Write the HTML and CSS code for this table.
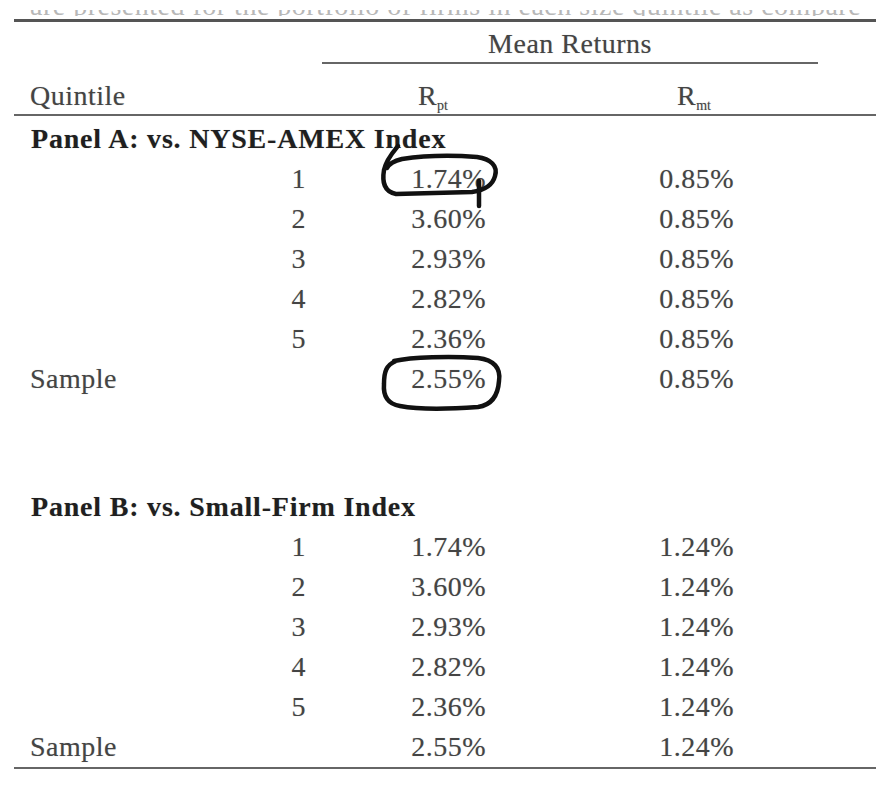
FILE: index.html
```html
<!DOCTYPE html>
<html lang="en">
<head>
<meta charset="utf-8">
<title>Mean Returns by Quintile</title>
<link rel="stylesheet" href="styles.css">
</head>
<body>
<div class="page">
  <div class="cut"><div class="cut-text">are presented for the portfolio of firms in each size quintile as compared with the market indices used</div></div>
  <div class="table">
    <div class="group">Mean Returns</div>
    <div class="row head">
      <div class="label">Quintile</div>
      <div class="hp">R<sub>pt</sub></div>
      <div class="hm">R<sub>mt</sub></div>
    </div>

    <div class="panel a">Panel A: vs. NYSE-AMEX Index</div>
    <div class="row"><div class="q">1</div><div class="v">1.74%</div><div class="v">0.85%</div></div>
    <div class="row"><div class="q">2</div><div class="v">3.60%</div><div class="v">0.85%</div></div>
    <div class="row"><div class="q">3</div><div class="v">2.93%</div><div class="v">0.85%</div></div>
    <div class="row"><div class="q">4</div><div class="v">2.82%</div><div class="v">0.85%</div></div>
    <div class="row"><div class="q">5</div><div class="v">2.36%</div><div class="v">0.85%</div></div>
    <div class="row"><div class="label">Sample</div><div class="v">2.55%</div><div class="v">0.85%</div></div>

    <div class="panel b">Panel B: vs. Small-Firm Index</div>
    <div class="row"><div class="q">1</div><div class="v">1.74%</div><div class="v">1.24%</div></div>
    <div class="row"><div class="q">2</div><div class="v">3.60%</div><div class="v">1.24%</div></div>
    <div class="row"><div class="q">3</div><div class="v">2.93%</div><div class="v">1.24%</div></div>
    <div class="row"><div class="q">4</div><div class="v">2.82%</div><div class="v">1.24%</div></div>
    <div class="row"><div class="q">5</div><div class="v">2.36%</div><div class="v">1.24%</div></div>
    <div class="row"><div class="label">Sample</div><div class="v">2.55%</div><div class="v">1.24%</div></div>
  </div>

  <svg class="marks" width="886" height="788" viewBox="0 0 886 788" aria-hidden="true">
    <path d="M398 146 C393 152 386 160 384 170 C382 182 384 192 396 194 L472 192 C486 190 493 184 495 176 C498 166 491 159 477 157 C450 155 422 156 402 159 C394 161 389 164 387 168"/>
    <path d="M479 181 L479 206"/>
    <path d="M394 361 C412 357 450 356 478 358 C494 360 501 368 499 381 C498 395 492 405 478 407 C450 409 421 410 400 406 C388 404 383 396 384 384 C384 372 386 365 396 361"/>
  </svg>
</div>
</body>
</html>
```

FILE: styles.css
```css
body {
  margin: 0;
  background: #fff;
  font-family: "Liberation Serif", "Times New Roman", serif;
  color: #444;
}

.page {
  position: relative;
  width: 886px;
  height: 788px;
  overflow: hidden;
  padding-top: 10px;
  box-sizing: border-box;
}

.cut {
  position: relative;
  margin-left: 30px;
  width: 830px;
  height: 6px;
  overflow: hidden;
  color: #b8b8b8;
  font-size: 28px;
}

.cut-text {
  position: absolute;
  left: 0;
  bottom: -4px;
  line-height: 28px;
  white-space: nowrap;
  letter-spacing: 0.5px;
}

.table {
  margin: 3px 0 0 14px;
  width: 862px;
  border-top: 3px solid #555;
  border-bottom: 2px solid #666;
  font-size: 28px;
  letter-spacing: 0.5px;
  text-shadow: 0 0 1px rgba(0, 0, 0, 0.25);
}

.group {
  margin: 4px 0 0 308px;
  width: 496px;
  text-align: center;
  line-height: 36px;
  border-bottom: 2px solid #666;
}

.row {
  display: grid;
  grid-template-columns: 292px 180px 248px 1fr;
  line-height: 40px;
}

.row.head {
  margin-top: 14px;
  line-height: 36px;
  border-bottom: 2px solid #666;
}

.label {
  padding-left: 16px;
}

.q,
.v {
  text-align: right;
}

.hp {
  text-align: right;
  padding-right: 38px;
}

.hm {
  text-align: right;
  padding-right: 23px;
}

sub {
  font-size: 14px;
  line-height: 0;
  vertical-align: -5px;
  letter-spacing: 0;
}

.panel {
  padding-left: 17px;
  line-height: 40px;
  font-weight: bold;
  color: #1f1f1f;
  letter-spacing: 0.8px;
}

.panel.a {
  margin-top: 3px;
}

.panel.b {
  margin-top: 88px;
}

.marks {
  position: absolute;
  top: 0;
  left: 0;
  pointer-events: none;
  fill: none;
  stroke: #111;
  stroke-width: 4.5;
  stroke-linecap: round;
  stroke-linejoin: round;
}
```
